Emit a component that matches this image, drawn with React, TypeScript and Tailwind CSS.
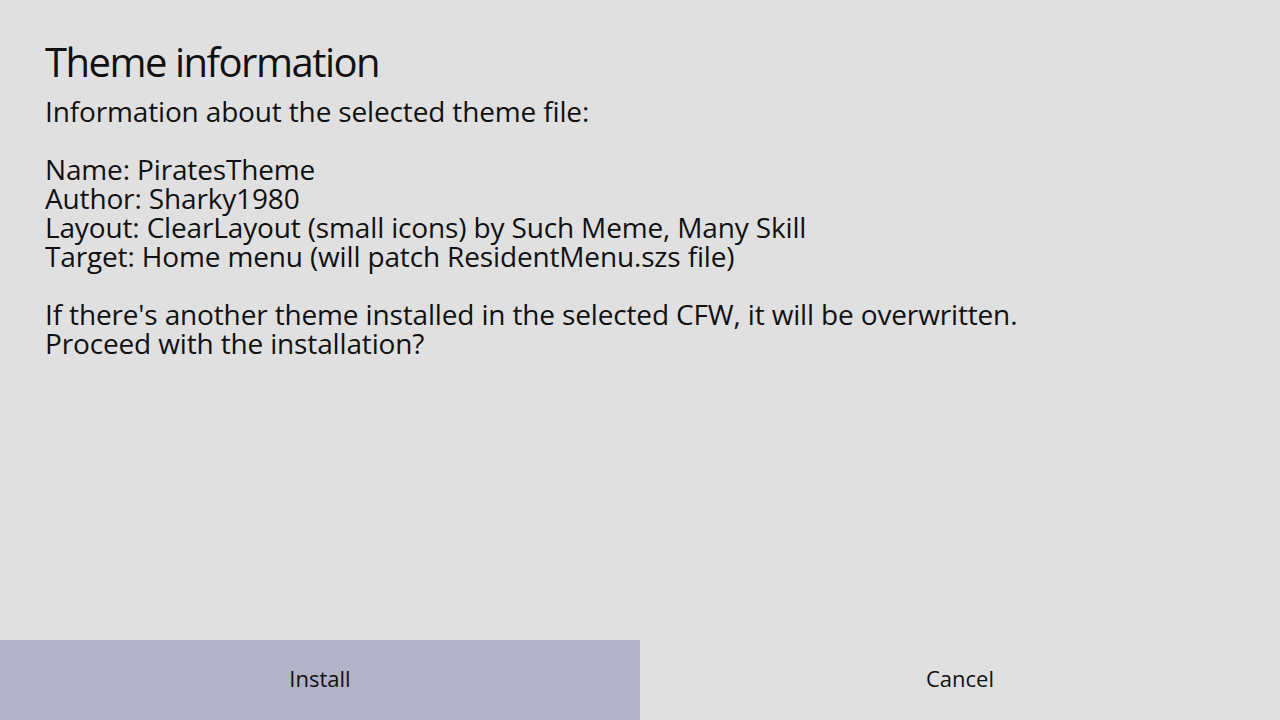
export default function App() {
  return (
    <div className="w-[1280px] h-[720px] flex flex-col bg-[#e0e0e0] text-[#111111] font-['Open_Sans',sans-serif]">
      <div className="flex-1 pl-[45px] pt-[38px]">
        <h1 className="text-[40px] leading-[48px] tracking-[-1.5px]">Theme information</h1>
        <div className="text-[28px] leading-[29px] tracking-[-0.15px] mt-[11px]">
          <p>Information about the selected theme file:</p>
          <p className="mt-[29px]">Name: PiratesTheme</p>
          <p>Author: Sharky1980</p>
          <p>Layout: ClearLayout (small icons) by Such Meme, Many Skill</p>
          <p>Target: Home menu (will patch ResidentMenu.szs file)</p>
          <p className="mt-[29px]">If there's another theme installed in the selected CFW, it will be overwritten.</p>
          <p>Proceed with the installation?</p>
        </div>
      </div>
      <div className="h-[80px] flex text-[22px]">
        <div className="flex-1 flex items-center justify-center pb-[4px] bg-[#b2b3c8]">Install</div>
        <div className="flex-1 flex items-center justify-center pb-[4px]">Cancel</div>
      </div>
    </div>
  );
}
